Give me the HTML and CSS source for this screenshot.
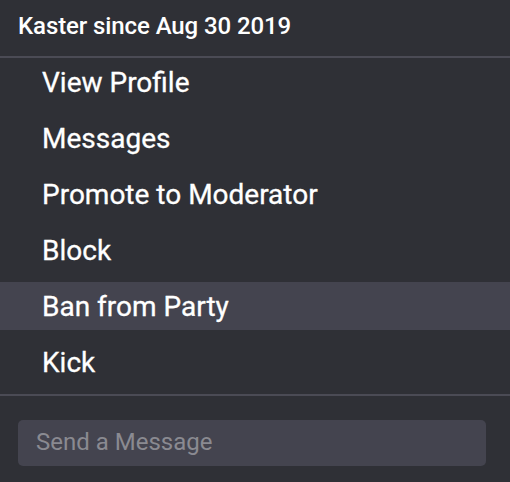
FILE: index.html
```html
<!DOCTYPE html>
<html>
<head>
<meta charset="utf-8">
<link rel="stylesheet" href="styles.css">
</head>
<body>
<div class="panel">
  <div class="header">Kaster since Aug 30 2019</div>
  <div class="divider"></div>
  <ul class="menu">
    <li class="item">View Profile</li>
    <li class="item">Messages</li>
    <li class="item">Promote to Moderator</li>
    <li class="item">Block</li>
    <li class="item active">Ban from Party</li>
    <li class="item">Kick</li>
  </ul>
  <div class="divider"></div>
  <div class="composer">
    <div class="input">Send a Message</div>
  </div>
</div>
</body>
</html>
```
FILE: styles.css
```css
html, body {
  margin: 0;
  padding: 0;
  background: #2f3036;
}
body {
  font-family: Roboto, "Noto Sans", sans-serif;
  color: #ffffff;
  width: 510px;
  height: 482px;
  overflow: hidden;
}
.panel {
  display: flex;
  flex-direction: column;
}
.header {
  height: 56px;
  box-sizing: border-box;
  padding: 0 0 4px 18px;
  display: flex;
  align-items: center;
  font-size: 24px;
  font-weight: 500;
  letter-spacing: -0.1px;
}
.divider {
  height: 2px;
  background: #4b4b55;
}
.menu {
  list-style: none;
  margin: 0;
  padding: 0 0 8px 0;
  display: flex;
  flex-direction: column;
  gap: 8px;
}
.item {
  height: 48px;
  display: flex;
  align-items: center;
  padding-left: 42px;
  font-size: 28px;
  font-weight: 400;
  -webkit-text-stroke: 0.3px #ffffff;
}
.item.active {
  background: #44444f;
}
.composer {
  padding: 24px 24px 0 18px;
}
.input {
  height: 46px;
  box-sizing: border-box;
  background: #44444f;
  border-radius: 5px;
  padding: 0 0 3px 18px;
  display: flex;
  align-items: center;
  font-size: 24px;
  color: #8a8a91;
}
```
